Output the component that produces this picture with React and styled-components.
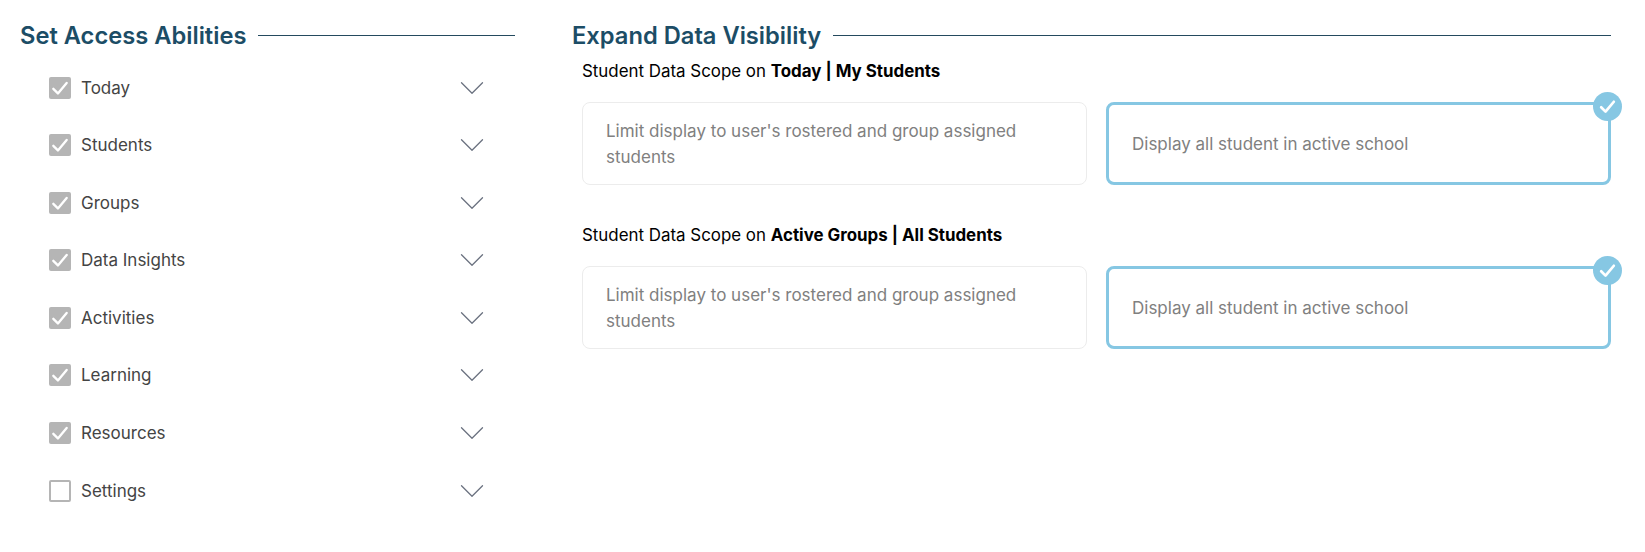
import React from "react"
import styled, { createGlobalStyle } from 'styled-components'
import { ChevronDown } from 'lucide-react'

const GlobalStyle = createGlobalStyle`
  html, body {
    margin: 0;
    padding: 0;
    background: #fff;
    font-family: 'Inter', 'Liberation Sans', sans-serif;
  }
`

const Page = styled.div`
  display: grid;
  grid-template-columns: 495px 1039px;
  column-gap: 57px;
  padding: 19px 34px 0 20px;
  height: 533px;
`

const Heading = styled.div`
  display: flex;
  align-items: center;
  gap: 12px;
  height: 33px;
  h2 {
    margin: 0;
    font-size: 23.7px;
    font-weight: 600;
    color: #1c4d66;
    white-space: nowrap;
  }
  span {
    flex: 1;
    height: 1px;
    background: #244a5e;
  }
`

const AbilityList = styled.div`
  display: flex;
  flex-direction: column;
  gap: 35.6px;
  padding: 24.5px 22px 0 29px;
`

const AbilityRow = styled.div`
  display: flex;
  align-items: center;
  gap: 10px;
  height: 22px;
`

const Box = styled.div`
  width: 22px;
  height: 22px;
  box-sizing: border-box;
  border-radius: 2px;
  display: flex;
  align-items: center;
  justify-content: center;
  background: ${p => p.$checked ? '#b5b5b5' : '#fff'};
  border: ${p => p.$checked ? 'none' : '2px solid #b5b5b5'};
`

const Label = styled.div`
  flex: 1;
  font-size: 17px;
  color: #444;
`

const Arrow = styled(ChevronDown)`
  color: #6b7280;
  flex-shrink: 0;
`

const ScopeList = styled.div`
  padding: 7px 0 0 10px;
`

const Scope = styled.div`
  margin-bottom: 38px;
`

const ScopeTitle = styled.div`
  font-size: 16.9px;
  color: #000;
  line-height: 24px;
  height: 24px;
  margin-bottom: 19px;
  b {
    font-weight: 700;
  }
`

const Options = styled.div`
  display: grid;
  grid-template-columns: 505px 505px;
  column-gap: 19px;
`

const Option = styled.div`
  position: relative;
  box-sizing: border-box;
  height: 83px;
  display: flex;
  align-items: center;
  padding: 0 23px;
  border-radius: 8px;
  font-size: 17px;
  line-height: 26px;
  color: #808080;
  border: ${p => p.$active ? '3px solid #86c7e3' : '1px solid #ececec'};
`

const Badge = styled.div`
  position: absolute;
  top: -13px;
  right: -14px;
  width: 29px;
  height: 29px;
  border-radius: 50%;
  background: #86c7e3;
  display: flex;
  align-items: center;
  justify-content: center;
`

const abilities = [
  ['Today', true],
  ['Students', true],
  ['Groups', true],
  ['Data Insights', true],
  ['Activities', true],
  ['Learning', true],
  ['Resources', true],
  ['Settings', false],
]

const scopes = [
  ['Today | My Students'],
  ['Active Groups | All Students'],
]

const Tick = ({ size, width }) => (
  <svg width={size} height={size} viewBox="0 0 24 24" fill="none" stroke="#fff" strokeWidth={width} strokeLinecap="round" strokeLinejoin="round">
    <path d="M4 13l5.5 5.5L20 6" />
  </svg>
)

export default function App() {
  return (
    <Page>
      <GlobalStyle />
      <div>
        <Heading><h2>Set Access Abilities</h2><span /></Heading>
        <AbilityList>
          {abilities.map(([name, checked]) => (
            <AbilityRow key={name}>
              <Box $checked={checked}>{checked && <Tick size={20} width={2.8} />}</Box>
              <Label>{name}</Label>
              <Arrow size={42} strokeWidth={0.75} />
            </AbilityRow>
          ))}
        </AbilityList>
      </div>
      <div>
        <Heading><h2>Expand Data Visibility</h2><span /></Heading>
        <ScopeList>
          {scopes.map(([name]) => (
            <Scope key={name}>
              <ScopeTitle>Student Data Scope on <b>{name}</b></ScopeTitle>
              <Options>
                <Option>Limit display to user's rostered and group assigned students</Option>
                <Option $active>
                  Display all student in active school
                  <Badge><Tick size={19} width={3.4} /></Badge>
                </Option>
              </Options>
            </Scope>
          ))}
        </ScopeList>
      </div>
    </Page>
  )
}
